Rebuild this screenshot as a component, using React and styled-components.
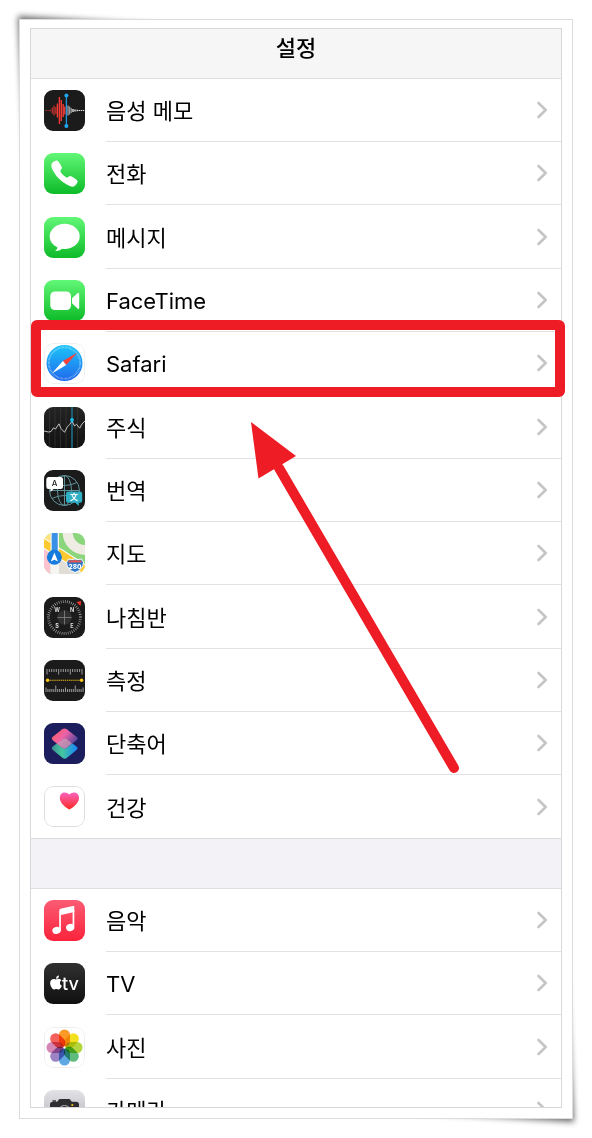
import React from "react";
import styled, { createGlobalStyle, css } from "styled-components";
import { IoCall } from "react-icons/io5";
import { FaApple } from "react-icons/fa";

const GlobalStyle = createGlobalStyle`
  *, *::before, *::after { box-sizing: border-box; }
  body {
    margin: 0;
    background: #fff;
    color: #000;
    font-family: "Inter", "Noto Sans CJK KR", sans-serif;
  }
`;

const Page = styled.div`
  display: flex;
  height: 100vh;
  padding: 19px;
  isolation: isolate;
  overflow: hidden;
`;

const Card = styled.div`
  position: relative;
  display: flex;
  flex: 1;
  min-width: 0;
  padding: 8px 10px 10px;
  border: 1px solid #dcdcdc;
  background: #fff;
`;

const CornerShadow = styled.svg`
  position: absolute;
  z-index: -1;
  width: 200px;
  height: 240px;
  ${({ $end }) =>
    $end
      ? css`right: 0; bottom: 0; transform: rotate(180deg);`
      : css`left: 0; top: 0;`}
`;

const Screen = styled.main`
  flex: 1;
  min-width: 0;
  border: 1px solid #d8d8da;
  overflow: hidden;
`;

const Header = styled.header`
  display: flex;
  justify-content: center;
  height: 50px;
  padding-top: 3px;
  border-bottom: 1px solid #dfdfe0;
  background: #f6f6f6;
`;

const Title = styled.h1`
  margin: 0;
  font-size: 22px;
  line-height: 32px;
  font-weight: 500;
`;

const Group = styled.ul`
  margin: 0;
  padding: 0;
  list-style: none;
`;

const Spacer = styled.div`
  height: 50px;
  border-bottom: 1px solid #dfdfe2;
  background: #f2f2f7;
`;

const Row = styled.li`
  height: 63px;
  &:nth-child(3n) { height: 64px; }
  &:last-child { border-bottom: 1px solid #dcdcde; }
`;

const RowLink = styled.a`
  display: flex;
  align-items: center;
  gap: 21px;
  height: 100%;
  padding-left: 13px;
  color: inherit;
  text-decoration: none;
`;

const AppIcon = styled.svg`
  flex: none;
  width: 41px;
  height: 41px;
  border-radius: 9px;
`;

const RowBody = styled.span`
  display: flex;
  flex: 1;
  align-items: center;
  justify-content: space-between;
  height: 100%;
  padding-right: 13px;
  border-bottom: 1px solid #e2e2e4;
  ${Row}:last-child & { border-bottom: 0; }
`;

const Label = styled.span`
  padding-top: 2px;
  font-size: 22px;
  line-height: 32px;
`;

const ChevronSvg = styled.svg`
  width: 12px;
  height: 18px;
`;

const Highlight = styled.div`
  position: absolute;
  top: 300px;
  left: 11px;
  right: 7px;
  height: 77px;
  border: 10px solid #ee1c25;
  border-radius: 6px;
  pointer-events: none;
`;

const Arrow = styled.svg`
  position: absolute;
  top: 400px;
  left: 230px;
  width: 212px;
  height: 356px;
  pointer-events: none;
`;

const Chevron = () => (
  <ChevronSvg viewBox="0 0 12 18" aria-hidden="true">
    <path d="M2.5 2 9.7 9 2.5 16" fill="none" stroke="#c5c5c7" strokeWidth="2.6" strokeLinecap="round" strokeLinejoin="round" />
  </ChevronSvg>
);

const Fade = ({ id, from, to }) => (
  <linearGradient id={id} x1="0" y1="0" x2="0" y2="1">
    <stop offset="0" stopColor={from} />
    <stop offset="1" stopColor={to} />
  </linearGradient>
);

const Tile = ({ id, from, to, children }) => (
  <AppIcon viewBox="0 0 41 41" aria-hidden="true">
    <defs><Fade id={id} from={from} to={to} /></defs>
    <rect width="41" height="41" fill={`url(#${id})`} />
    {children}
  </AppIcon>
);

const Outline = ({ color }) => (
  <rect x=".5" y=".5" width="40" height="40" rx="8.5" fill="none" stroke={color} />
);

const bars = (list, color) =>
  list.map(([x, h]) => (
    <path key={x} d={`M${x} ${20.5 - h / 2}v${h}`} stroke={color} strokeWidth="1.4" />
  ));

const VoiceMemos = () => (
  <Tile id="memo" from="#1b1b1b" to="#1b1b1b">
    {bars([[2, 1], [4.2, 1], [6.3, 1.5], [8.3, 6], [10, 10], [11.8, 7]], "#b0302b")}
    {bars([[13.4, 14], [15.4, 27], [17.3, 21], [19.2, 13], [20.8, 8]], "#f63b35")}
    {bars([[24, 10], [25.6, 8], [27.2, 5]], "#98989a")}
    {bars([[29, 3], [31, 2], [33.2, 1.5], [35.3, 1.2], [37.4, 1], [39.5, 1]], "#e4e4e4")}
    <path d="M22.4 5.5v30.5" stroke="#2196dd" strokeWidth="1.3" />
    <circle cx="22.4" cy="5.4" r="2" fill="#20a8f2" />
    <circle cx="22.4" cy="36" r="2" fill="#20a8f2" />
  </Tile>
);

const Phone = () => (
  <Tile id="phone" from="#62f777" to="#0dbb28">
    <IoCall x="5.5" y="5.5" size="30" color="#fff" />
  </Tile>
);

const Messages = () => (
  <Tile id="msg" from="#62f777" to="#0dbb28">
    <ellipse cx="20.7" cy="19.4" rx="15" ry="12.6" fill="#fff" />
    <path d="M13.5 28.5c.2 2.5-.6 4.2-2.4 5.6 3.2.2 5.9-1.2 7.7-2.8z" fill="#fff" />
  </Tile>
);

const FaceTime = () => (
  <Tile id="ft" from="#62f777" to="#0dbb28">
    <rect x="6.3" y="11.5" width="20.7" height="18.5" rx="4.5" fill="#fff" />
    <path d="M28 18.3 33.6 13.2q1.6-1.1 1.6.9v13.600q0 2-1.6.9L28 23.2z" fill="#fff" />
  </Tile>
);

const Safari = () => (
  <Tile id="safbg" from="#fff" to="#fff">
    <defs><Fade id="saf" from="#1cc5f8" to="#2168ee" /></defs>
    <circle cx="20.5" cy="20" r="18" fill="url(#saf)" />
    <circle cx="20.5" cy="20" r="15.7" fill="none" stroke="#d5efff" strokeOpacity=".75" strokeWidth="1.8" strokeDasharray=".5 .87" />
    <path d="M33.5 9.500 18.9 18 22.3 22z" fill="#fb4038" />
    <path d="M7.8 30.5 18.9 18 22.3 22z" fill="#fff" />
    <Outline color="#efefef" />
  </Tile>
);

const Stocks = () => (
  <Tile id="stock" from="#242424" to="#111">
    <path d="M5.5 0v41M11 0v41M16.5 0v41M22 0v41M33.5 0v41" stroke="#363636" strokeWidth=".7" />
    <path d="M28 0v41" stroke="#1d6f89" strokeWidth="1.6" />
    <path d="M0 24l4.5 1 2.5-.5 2.5-3.7 2 1.2 3.5-5.2 2 4.7 3.5 3.8 3-5.8 2.2-2L28 14l2.5 5 2-1.7 3.2 3.9L38 17l3-3" fill="none" stroke="#d4d4d4" strokeWidth=".9" strokeLinejoin="round" />
    <circle cx="28" cy="13" r="1.9" fill="#19bff0" />
  </Tile>
);

const Translate = () => (
  <Tile id="trans" from="#1b1b1b" to="#1b1b1b">
    <g fill="none" stroke="#5f9298" strokeWidth="1">
      <circle cx="20.5" cy="20.5" r="15" />
      <ellipse cx="20.5" cy="20.5" rx="7" ry="15" />
      <path d="M20.5 5.5v30M5.5 20.5h30M8 12.5q12.5 6 25 0M8 28.5q12.5-6 25 0" />
    </g>
    <path d="M4.5 7h12q2.5 0 2.5 2.5v7q0 2.5-2.5 2.5H9.5L6.5 22v-3h-2Q2.3 19 2.3 16.5v-7Q2.3 7 4.5 7z" fill="#fff" />
    <path d="M24 21.5h12q2.2 0 2.2 2.2v7q0 2-2.2 2h-1.2V36l-3.5-3.3H24q-2 0-2-2v-7q0-2.2 2-2.2z" fill="#2eafc3" />
    <text x="10.7" y="16" textAnchor="middle" fontSize="8" fontWeight="500" fontFamily="Inter, sans-serif" fill="#222">A</text>
    <text x="30" y="30" textAnchor="middle" fontSize="8" fontWeight="700" fontFamily='"Noto Sans CJK SC", sans-serif' fill="#fff">文</text>
  </Tile>
);

const Maps = () => (
  <Tile id="maps" from="#8bd67c" to="#8bd67c">
    <path d="M0 0h13v20H0z" fill="#e9eae3" />
    <path d="M0 0h7v12L0 7z" fill="#fde27f" />
    <path d="M0 14l24 10 17 17H0z" fill="#e0ded6" />
    <path d="M0 16l6 3v22H0z" fill="#fbc3ce" />
    <path d="M42 17C31 17 23.500 9 23.500-2" fill="none" stroke="#efece3" strokeWidth="10" />
    <path d="M-2 9 43 38" stroke="#fff" strokeWidth="9.5" />
    <path d="M-2 9 43 38" stroke="#fdc92f" strokeWidth="7.5" />
    <path d="M6.500 0h8.500v41H6.500z" fill="#f5f5f1" />
    <path d="M7.7 0h6v22h-6z" fill="#3a8fe6" />
    <circle cx="10.4" cy="24.3" r="7.5" fill="#157bdc" />
    <path d="M10.4 19.5 14 28.5l-3.6-1.7-3.6 1.7z" fill="#fff" />
    <path d="M24.500 26q3.200 1 6.500 0 3.300 1 6.500 0 .8 2 2 3.200-.2 7.300-8.500 10.300-8.300-3-8.500-10.300 1.200-1.200 2-3.200z" fill="#2b76c6" stroke="#fff" strokeWidth="1" />
    <path d="M25.200 27.200q2.700.7 5.800-.1 3.100.8 5.800.1l1.200 2.300H24z" fill="#e4574e" />
    <text x="31" y="35.5" textAnchor="middle" fontSize="6.5" fontWeight="800" fontFamily="Inter, sans-serif" fill="#fff">280</text>
  </Tile>
);

const Compass = () => (
  <Tile id="comp" from="#1b1b1b" to="#1b1b1b">
    <circle cx="20.5" cy="20.5" r="16" fill="none" stroke="#bbb" strokeWidth="2.8" strokeDasharray=".6 1.494" />
    <circle cx="20.5" cy="20.5" r="7.3" fill="#303030" />
    <path d="M20.5 13.5v14M13.5 20.5h14" stroke="#858585" strokeWidth=".8" />
    <g fontSize="5.5" fontWeight="700" fontFamily="Inter, sans-serif" fill="#ddd" textAnchor="middle">
      <text x="13" y="14.8">W</text>
      <text x="28" y="14.8">N</text>
      <text x="13" y="30.5">S</text>
      <text x="28" y="30.5">E</text>
    </g>
    <path d="M37.2 4 36.5 9 32.3 4.9z" fill="#f0352b" />
  </Tile>
);

const Measure = () => (
  <Tile id="meas" from="#1b1b1b" to="#1b1b1b">
    <g stroke="#bdbdbd" strokeWidth=".8">
      {Array.from({ length: 16 }, (_, i) => (
        <path key={i} d={`M${3 + i * 2.33} 9v${[0, 5, 10, 15].includes(i) ? 5.5 : 3}`} />
      ))}
      {Array.from({ length: 20 }, (_, i) => (
        <path key={`b${i}`} d={`M${2 + i * 1.95} 32v-${i === 5 || i === 15 ? 6.5 : i === 0 || i === 10 || i === 19 ? 4.5 : 3}`} />
      ))}
    </g>
    <path d="M4 20.3h33" stroke="#e8b81a" strokeWidth="1.1" strokeDasharray="1.4 .7" />
    <circle cx="3.6" cy="20.3" r="1.7" fill="#fdc815" />
    <circle cx="37.6" cy="20.3" r="1.7" fill="#fdc815" />
  </Tile>
);

const Shortcuts = () => (
  <Tile id="short" from="#1c1d5c" to="#1c1d5c">
    <defs>
      <linearGradient id="sTop" x1="0" y1="0" x2="1" y2=".6">
        <stop offset=".1" stopColor="#fa6060" />
        <stop offset=".5" stopColor="#ee62a8" />
        <stop offset=".95" stopColor="#5b479c" />
      </linearGradient>
      <linearGradient id="sBottom" x1="0" y1="0" x2="1" y2="0">
        <stop offset="0" stopColor="#3a8f90" />
        <stop offset=".4" stopColor="#45c79f" />
        <stop offset="1" stopColor="#1683fb" />
      </linearGradient>
    </defs>
    <path d="M18.5 16.3q2-1.300 4 0l10 7.300q2 1.700 0 3.4l-9.5 7.8q-2.3 1.7-4.6 0L8.8 27q-2-1.7 0-3.4z" fill="url(#sBottom)" />
    <path d="M18.3 6.3q2.2-1.5 4.4 0l9.8 7.5q2 1.7 0 3.4l-9.8 7.8q-2.2 1.5-4.4 0l-9.5-7.8q-2-1.7 0-3.400z" fill="url(#sTop)" />
    <path d="M18.800 16q1.800-1.200 3.700 0l5.300 4.300-5.300 4.500q-1.900 1.400-3.900 0l-5.400-4.400z" fill="#c79cb4" opacity=".75" />
  </Tile>
);

const Health = () => (
  <Tile id="healthbg" from="#fff" to="#fff">
    <defs><Fade id="heart" from="#fb62bd" to="#fd2a22" /></defs>
    <path d="M25.4 8.600C28 5.4 35 5.4 35 12c0 5.4-6.2 9.6-9.6 11.500C22 21.6 15.8 17.4 15.8 12c0-6.6 7-6.6 9.6-3.4z" fill="url(#heart)" />
    <Outline color="#dedede" />
  </Tile>
);

const Music = () => (
  <Tile id="music" from="#fb5c74" to="#fa233b">
    <path d="M17.3 8.4 29 5.9q1.3-.2 1.3 1v5.2L16.9 15v15.5h-1.7V10.8q0-2 2.1-2.4z" fill="#fff" />
    <path d="M28.6 10h1.7v17h-1.7z" fill="#fff" />
    <ellipse cx="12.6" cy="30.3" rx="4.3" ry="3.5" transform="rotate(-15 12.6 30.3)" fill="#fff" />
    <ellipse cx="26.2" cy="27.5" rx="4.2" ry="3.5" transform="rotate(-15 26.2 27.5)" fill="#fff" />
  </Tile>
);

const AppleTV = () => (
  <Tile id="tv" from="#303030" to="#101010">
    <FaApple x="4" y="11.5" size="16" color="#fff" />
    <text x="18" y="27" fontSize="18" fontWeight="500" fontFamily="Inter, sans-serif" fill="#fff">tv</text>
  </Tile>
);

const petals = ["#fb9a26", "#f3e01f", "#b3d63c", "#5fbc7c", "#5fa8e3", "#9b83c4", "#d587b6", "#f4605a"];

const Petal = styled.rect`
  mix-blend-mode: multiply;
`;

const Photos = () => (
  <Tile id="photos" from="#fff" to="#fff">
    {petals.map((color, i) => (
      <Petal
        key={color}
        x="15"
        y="2.5"
        width="11"
        height="17"
        rx="5.5"
        fill={color}
        transform={`rotate(${i * 45} 20.5 20.5)`}
      />
    ))}
    <Outline color="#efefef" />
  </Tile>
);

const Camera = () => (
  <Tile id="cam" from="#e2e2e7" to="#a8a8ae">
    <path d="M6 14.5q0-2.800 3-2.800h3.500q1 0 1.500-1l.6-1q.5-.8 1.500-.8h8.800q1 0 1.500.8l.6 1q.5 1 1.500 1H32q3 0 3 2.800V31H6z" fill="#2e2e30" />
    <path d="M8.500 10.200h3.500v1.500H8.500z" fill="#2e2e30" />
    <circle cx="20.5" cy="22" r="6.500" fill="#2e2e30" stroke="#c4c4c8" strokeWidth=".9" />
    <circle cx="28.3" cy="15" r="1.1" fill="#f5c518" />
  </Tile>
);

const systemApps = [
  ["음성 메모", VoiceMemos],
  ["전화", Phone],
  ["메시지", Messages],
  ["FaceTime", FaceTime],
  ["Safari", Safari],
  ["주식", Stocks],
  ["번역", Translate],
  ["지도", Maps],
  ["나침반", Compass],
  ["측정", Measure],
  ["단축어", Shortcuts],
  ["건강", Health],
];

const mediaApps = [
  ["음악", Music],
  ["TV", AppleTV],
  ["사진", Photos],
  ["카메라", Camera],
];

const SettingsGroup = ({ items }) => (
  <Group>
    {items.map(([name, Icon]) => (
      <Row key={name}>
        <RowLink href="#">
          <Icon />
          <RowBody>
            <Label>{name}</Label>
            <Chevron />
          </RowBody>
        </RowLink>
      </Row>
    ))}
  </Group>
);

const PaperShadow = ({ end }) => (
  <CornerShadow $end={end} viewBox="0 0 200 240" aria-hidden="true">
    <defs>
      <filter id={end ? "curlEnd" : "curlStart"} x="-20%" y="-20%" width="140%" height="140%">
        <feGaussianBlur stdDeviation="3" />
      </filter>
    </defs>
    <path d="M18 16 180 26v14L40 200H27z" fill="#000" opacity=".6" filter={`url(#${end ? "curlEnd" : "curlStart"})`} />
  </CornerShadow>
);

export default function App() {
  return (
    <>
      <GlobalStyle />
      <Page>
        <PaperShadow />
        <PaperShadow end />
        <Card>
          <Screen>
            <Header><Title>설정</Title></Header>
            <SettingsGroup items={systemApps} />
            <Spacer />
            <SettingsGroup items={mediaApps} />
          </Screen>
          <Highlight />
          <Arrow viewBox="0 0 212 356" aria-hidden="true">
            <path d="M29 48 204 348" stroke="#ee1c25" strokeWidth="10" strokeLinecap="round" />
            <path d="M1 2 46 36 8.5 58.5z" fill="#ee1c25" />
          </Arrow>
        </Card>
      </Page>
    </>
  );
}
